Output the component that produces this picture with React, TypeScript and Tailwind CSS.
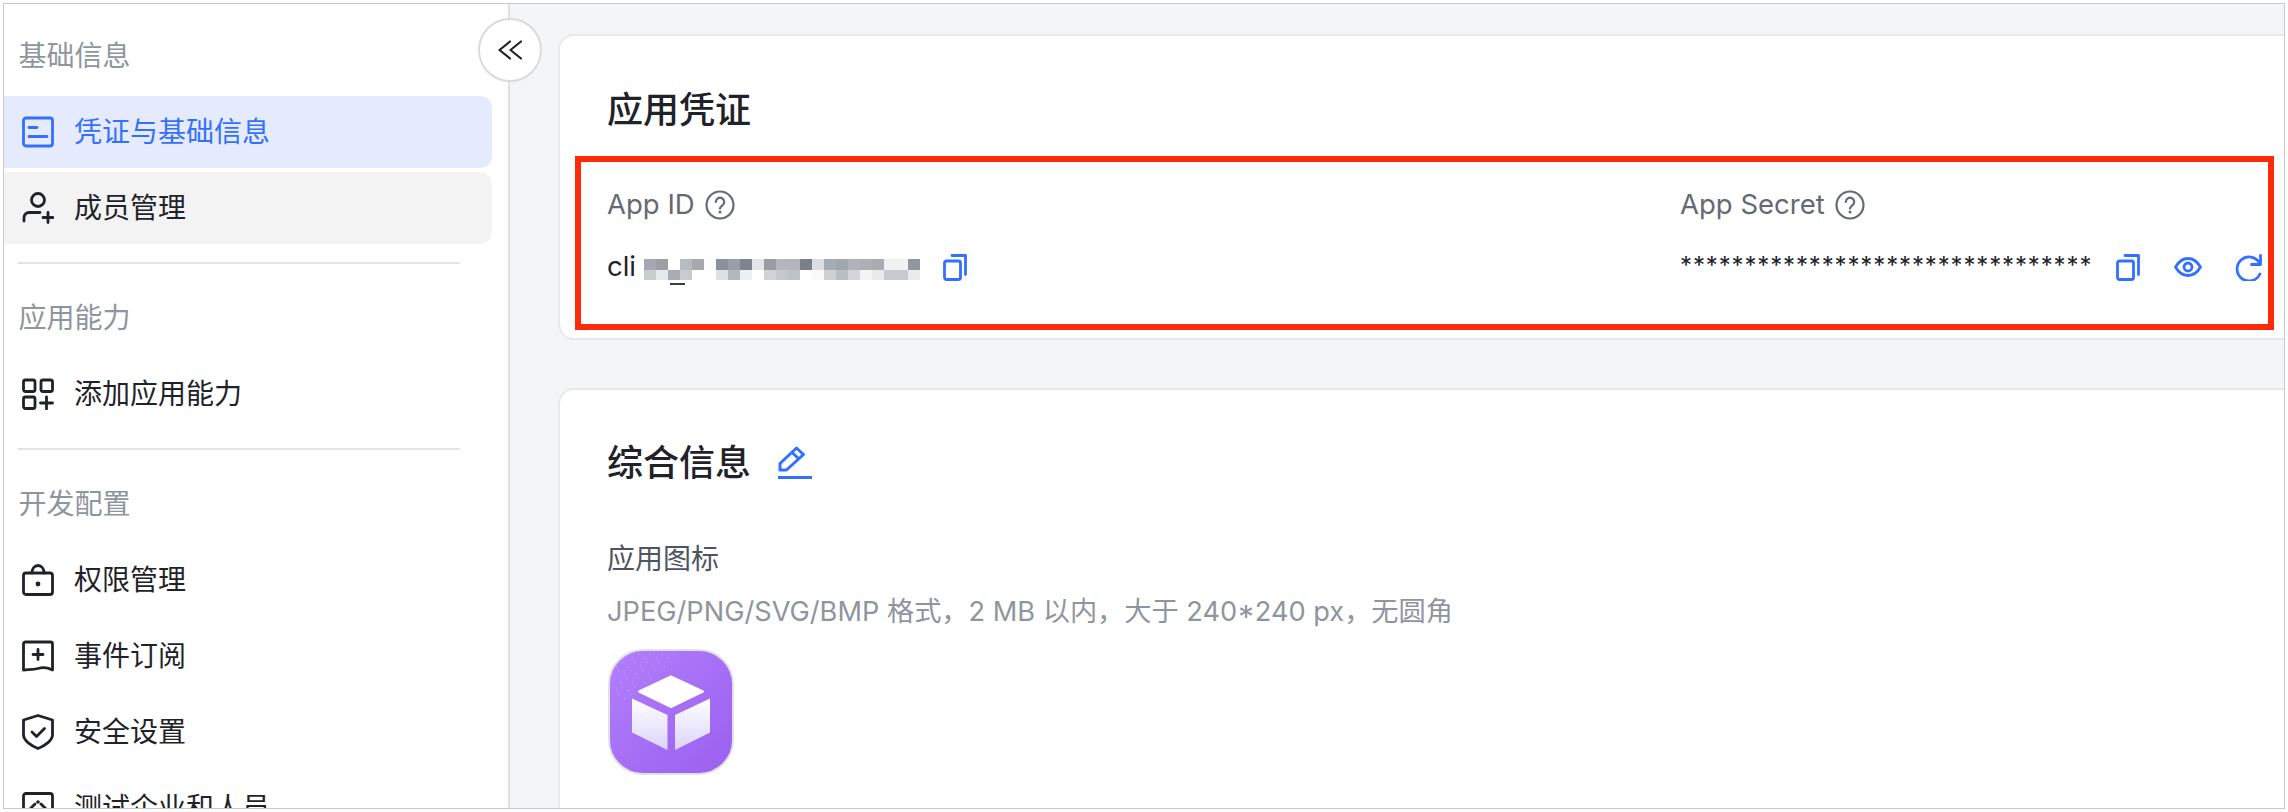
import type { ReactNode } from "react";

const font = "[font-family:Inter,'Noto_Sans_CJK_SC',sans-serif]";

// blurred part of the App ID, one colour per 12px cell
const mosaicTop = [
  "#a4a9b0", "#9a9fa6", "#ffffff", "#b8bcc2", "#a5aab0", "#fdfdfd", "#8b909a", "#9a9ea6",
  "#7f848e", "#e4e5e8", "#989ca4", "#b3b6bc", "#b3b6bc", "#7a7f8a", "#dcdde0", "#a7abb2",
  "#a2a6ae", "#b0b3b9", "#adb0b6", "#a9adb3", "#f0f1f2", "#f0f1f2", "#92969e",
];
const mosaicBottom = [
  "#c8cbcf", "#e8e9eb", "#a9adb3", "#c8cbd0", "#ffffff", "#ffffff", "#e0e1e4", "#b4b7bd",
  "#eeeff0", "#ffffff", "#d0d2d5", "#c5c7cb", "#bfc2c6", "#ffffff", "#fafafa", "#ced0d4",
  "#babdc2", "#d4d6d9", "#f4f4f5", "#e9eaec", "#c8cad0", "#c8cad0", "#eaebed",
];

function Icon({ children, w = 32, h = 32 }: { children: ReactNode; w?: number; h?: number }) {
  return (
    <svg
      width={w}
      height={h}
      viewBox={`0 0 ${w} ${h}`}
      fill="none"
      stroke="currentColor"
      strokeWidth="2.8"
      strokeLinecap="round"
      strokeLinejoin="round"
      className="shrink-0"
    >
      {children}
    </svg>
  );
}

const CredentialIcon = () => (
  <Icon>
    <rect x="1.5" y="2" width="29" height="28" rx="2.5" />
    <path d="M7 11.5h8M7 20.5h18" />
  </Icon>
);
const MemberIcon = () => (
  <Icon>
    <circle cx="16" cy="8" r="6.5" />
    <path d="M2 29v-3.5a5 5 0 0 1 5-5h11" />
    <path d="M21 25.5h10M26 20.5v10" />
  </Icon>
);
const AddIcon = () => (
  <Icon>
    <rect x="1.5" y="2" width="11.5" height="11.5" rx="2" />
    <rect x="19" y="2" width="11.5" height="11.5" rx="2" />
    <rect x="1.5" y="19" width="11.5" height="11.5" rx="2" />
    <path d="M18.5 25h12M24.5 19v12" />
  </Icon>
);
const LockIcon = () => (
  <Icon>
    <rect x="1.5" y="9" width="29" height="21.5" rx="2.5" />
    <path d="M10 9c0-4.500 2.500-7.500 6-7.500s6 3 6 7.500" />
    <circle cx="16" cy="20" r="2.400" fill="currentColor" stroke="none" />
  </Icon>
);
const EventIcon = () => (
  <Icon>
    <path d="M1.500 4a2 2 0 0 1 2-2h25a2 2 0 0 1 2 2v26c-5-2.500-9.500-3-14.500-1.500s-9.500 1-14.500 1.500z" />
    <path d="M11 14.500h10M16 9.500v10" />
  </Icon>
);
const ShieldIcon = () => (
  <Icon h={36}>
    <path d="M16 1.500 30.500 6v15c0 5.500-8 11-14.500 13.500C9.500 32 1.500 26.500 1.500 21V6z" />
    <path d="m10 18 4.500 4.500 8-8" />
  </Icon>
);
const TestIcon = () => (
  <Icon>
    <rect x="1.5" y="1.5" width="29" height="29" rx="2.5" />
    <path d="m7 18 6-6M25 18l-6-6" />
    <circle cx="16" cy="10" r="1.8" fill="currentColor" stroke="none" />
  </Icon>
);

const CopyIcon = () => (
  <Icon w={24} h={27}>
    <rect x="1.5" y="7" width="16" height="18.500" rx="2" />
    <path d="M9 1.500h13.500v19" />
  </Icon>
);
const EyeIcon = () => (
  <Icon w={28} h={20}>
    <path d="M1.500 10C5 4 9 1.500 14 1.500S23 4 26.500 10C23 16 19 18.500 14 18.500S5 16 1.500 10z" />
    <circle cx="14" cy="10" r="4" />
  </Icon>
);
const RefreshIcon = () => (
  <Icon w={27} h={27}>
    <path d="M25 20A12 12 0 1 1 24.500 9" />
    <path d="M25.500 1.500V10.500H16.500" />
  </Icon>
);
const QuestionIcon = () => (
  <svg width="30" height="30" viewBox="0 0 30 30" fill="none" stroke="currentColor" strokeWidth="2.2" strokeLinecap="round" className="shrink-0">
    <circle cx="15" cy="15" r="13.500" />
    <path d="M10.800 12a4.200 4.200 0 1 1 6.600 3.400c-1.500 1-2.400 1.700-2.400 3.200" />
    <circle cx="15" cy="22" r="1.500" fill="currentColor" stroke="none" />
  </svg>
);
const PencilIcon = () => (
  <svg width="34" height="34" viewBox="0 0 34 34" fill="none" stroke="#3370ff" strokeWidth="3" strokeLinejoin="round" className="shrink-0">
    <path d="M2 24v-6.500L18.500 2l7 6.500L8.500 24z" />
    <path d="m14 6.500 7 6.500" />
    <path d="M0 31.500h34" />
  </svg>
);

function AppLogo() {
  const dots: [number, number][] = [];
  for (let row = 0; row < 12; row++) {
    for (let col = 0; col < 16 - row; col++) {
      if ((row * 7 + col * 5) % 3 === 0) dots.push([6 + col * 4 + (row % 2) * 2, 5 + row * 4]);
    }
  }
  return (
    <svg width="126" height="126" viewBox="0 0 126 126" className="shrink-0">
      <defs>
        <linearGradient id="logoBg" x1="0" y1="0" x2="1" y2="1">
          <stop offset="0" stopColor="#b27ffc" />
          <stop offset="1" stopColor="#9a5fef" />
        </linearGradient>
        <linearGradient id="logoFace" x1="0" y1="0" x2="0" y2="1">
          <stop offset="0" stopColor="#ffffff" />
          <stop offset="1" stopColor="#dcd4fc" />
        </linearGradient>
      </defs>
      <rect x="1" y="1" width="124" height="124" rx="34" fill="url(#logoBg)" stroke="#e2e2e5" strokeWidth="2" />
      {dots.map(([x, y]) => (
        <rect key={`${x}-${y}`} x={x} y={y} width="1" height="1" fill="#c9d8fb" opacity="0.7" />
      ))}
      <path d="M63 27.500 95 42.500 63 58 31 42.500z" fill="#ffffff" stroke="#ffffff" strokeWidth="2" strokeLinejoin="round" />
      <path d="M24 49.500 59.500 66v35L24 83.500z" fill="url(#logoFace)" />
      <path d="M67 66 102 49.500v34L67 101z" fill="url(#logoFace)" />
    </svg>
  );
}

function AppIdMosaic() {
  return (
    <svg width="276" height="28" viewBox="0 0 276 28" className="shrink-0">
      {mosaicTop.map((color, i) => (
        <rect key={i} x={i * 12} y="0" width="12" height="11" fill={color} />
      ))}
      {mosaicBottom.map((color, i) => (
        <rect key={i} x={i * 12} y="11" width="12" height="10" fill={color} />
      ))}
      <rect x="26" y="24" width="15" height="2" fill="#3b4048" />
    </svg>
  );
}

function SectionLabel({ children }: { children: ReactNode }) {
  return (
    <div className="mb-5 flex h-10 items-center pl-[14.5px] text-[28px] leading-10 text-[#8f959e]">
      {children}
    </div>
  );
}

function MenuItem({
  icon,
  label,
  state,
}: {
  icon: ReactNode;
  label: string;
  state?: "active" | "hover";
}) {
  const stateClass =
    state === "active"
      ? "bg-[#e5ebfd] text-[#3370ff]"
      : state === "hover"
        ? "bg-[#f3f3f4] text-[#1f2329]"
        : "text-[#1f2329]";
  return (
    <div className={`flex h-[72px] items-center rounded-r-[12px] pl-[18px] text-[28px] ${stateClass}`}>
      <span className="flex w-[52px] shrink-0">{icon}</span>
      <span className="whitespace-nowrap">{label}</span>
    </div>
  );
}

function Divider() {
  return <div className="mt-[18px] mb-[34px] ml-[14px] h-[2px] w-[442px] bg-[#e2e3e5]" />;
}

function Sidebar() {
  return (
    <aside className="relative h-full w-[506px] shrink-0 border-r-2 border-[#dfe0e2] bg-white pt-8">
      <div className="w-[488px]">
        <SectionLabel>基础信息</SectionLabel>
        <div className="flex flex-col gap-1">
          <MenuItem icon={<CredentialIcon />} label="凭证与基础信息" state="active" />
          <MenuItem icon={<MemberIcon />} label="成员管理" state="hover" />
        </div>
        <Divider />
        <SectionLabel>应用能力</SectionLabel>
        <MenuItem icon={<AddIcon />} label="添加应用能力" />
        <Divider />
        <SectionLabel>开发配置</SectionLabel>
        <div className="flex flex-col gap-1">
          <MenuItem icon={<LockIcon />} label="权限管理" />
          <MenuItem icon={<EventIcon />} label="事件订阅" />
          <MenuItem icon={<ShieldIcon />} label="安全设置" />
          <MenuItem icon={<TestIcon />} label="测试企业和人员" />
        </div>
      </div>
      <button className="absolute top-[14px] left-[474px] flex size-16 items-center justify-center rounded-full border-2 border-[#d9dadc] bg-white text-[#1f2329]">
        <svg width="24" height="20" viewBox="0 0 24 20" fill="none" stroke="currentColor" strokeWidth="2.2" strokeLinecap="round" strokeLinejoin="round">
          <path d="M12 1.500 1.500 10 12 18.500M23 1.500 12.500 10 23 18.500" />
        </svg>
      </button>
    </aside>
  );
}

function FieldLabel({ children }: { children: ReactNode }) {
  return (
    <div className="flex h-10 items-center gap-[10px] text-[27.5px] text-[#646a73]">
      <span>{children}</span>
      <QuestionIcon />
    </div>
  );
}

function Credentials() {
  return (
    <section className="relative h-[306px] rounded-[16px] border-2 border-[#e8e9eb] bg-white pt-[50px] pl-[47px]">
      <h2 className="h-12 text-[36px] leading-12 font-medium text-[#1f2329]">应用凭证</h2>
      <div className="mt-[51px] grid grid-cols-[1073px_1fr] grid-rows-[40px_40px] gap-y-[22px]">
        <FieldLabel>App ID</FieldLabel>
        <FieldLabel>App Secret</FieldLabel>
        <div className="flex h-10 items-center text-[27.5px] text-[#1f2329]">
          <span className="w-[37px]">cli</span>
          <span className="mt-[12px] flex w-[299px]">
            <AppIdMosaic />
          </span>
          <span className="text-[#3370ff]">
            <CopyIcon />
          </span>
        </div>
        <div className="flex h-10 items-center text-[#3370ff]">
          <span className="-mt-[3px] w-[436px] text-[24px] tracking-[0.86px] whitespace-nowrap text-[#1f2329]">
            ********************************
          </span>
          <CopyIcon />
          <span className="ml-[34px]">
            <EyeIcon />
          </span>
          <span className="ml-[33px]">
            <RefreshIcon />
          </span>
        </div>
      </div>
      {/* annotation drawn over the screenshot */}
      <div className="pointer-events-none absolute top-[120px] left-[15px] h-[174px] w-[1699px] border-[6px] border-[#ff2a0a]" />
    </section>
  );
}

function GeneralInfo() {
  return (
    <section className="mt-12 rounded-[16px] border-2 border-[#e8e9eb] bg-white pt-[49px] pb-12 pl-[47px]">
      <div className="flex h-12 items-center gap-[27px]">
        <h2 className="text-[36px] leading-12 font-medium text-[#1f2329]">综合信息</h2>
        <PencilIcon />
      </div>
      <div className="mt-[52px] h-10 text-[28px] leading-10 text-[#4e5561]">应用图标</div>
      <div className="mt-[13px] h-10 text-[27.2px] leading-10 whitespace-nowrap text-[#8f959e]">
        JPEG/PNG/SVG/BMP 格式，2 MB 以内，大于 240*240 px，无圆角
      </div>
      <div className="mt-[17px] ml-px">
        <AppLogo />
      </div>
    </section>
  );
}

export default function App() {
  return (
    <div className={`h-[812px] w-[2288px] overflow-hidden bg-white pt-[3px] pl-[3px] ${font}`}>
      <div className="flex h-[806px] w-[2282px] overflow-hidden border border-[#c9c9c9]">
        <Sidebar />
        <main className="min-w-0 flex-1 overflow-hidden bg-[#f4f5f6] pt-[30px] pl-12">
          <div className="-mr-8">
            <Credentials />
            <GeneralInfo />
          </div>
        </main>
      </div>
    </div>
  );
}
